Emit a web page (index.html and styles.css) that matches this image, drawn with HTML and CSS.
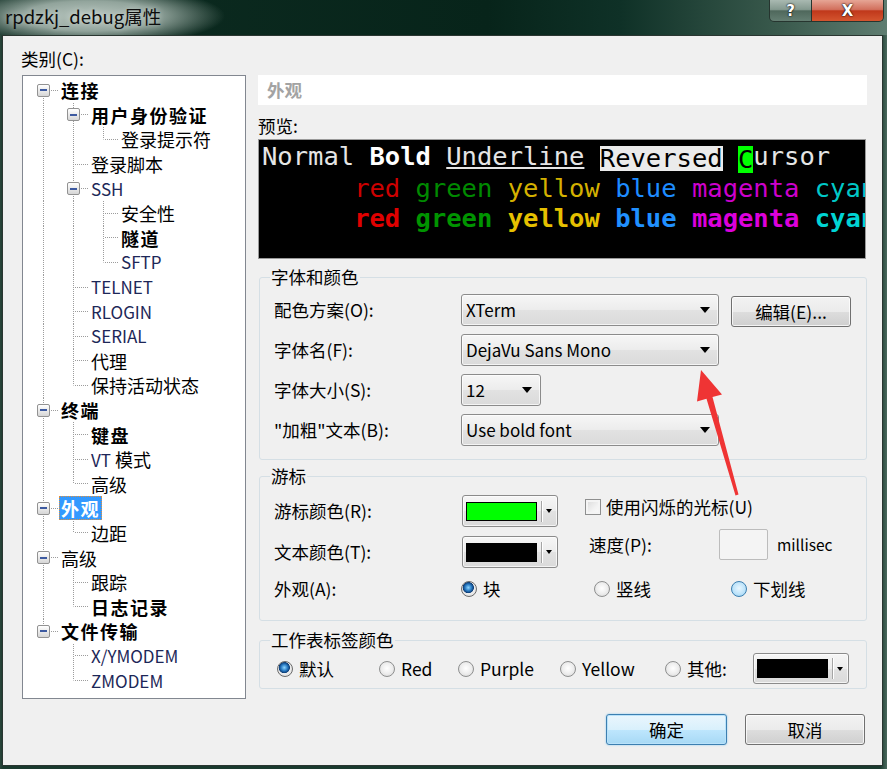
FILE: index.html
```html
<!DOCTYPE html>
<html>
<head>
<meta charset="utf-8">
<title>rpdzkj_debug属性</title>
<link rel="stylesheet" href="styles.css">
</head>
<body>
<div class="window">
  <div class="titlebar">
    <div class="title">rpdzkj_debug属性</div>
    <div class="caption">
      <div class="cbtn help">?</div>
      <div class="cbtn close">X</div>
    </div>
  </div>
  <div class="client">
    <div class="main">
      <div class="left">
        <div class="cat-label">类别(C):</div>
        <div class="tree">
          <div class="row"><span class="c xf"><span class="bx"></span></span><span class="tx b">连接</span></div>
          <div class="row"><span class="c v"></span><span class="c x"><span class="bx"></span></span><span class="tx b">用户身份验证</span></div>
          <div class="row"><span class="c v"></span><span class="c v"></span><span class="c l"></span><span class="tx">登录提示符</span></div>
          <div class="row"><span class="c v"></span><span class="c t"></span><span class="tx">登录脚本</span></div>
          <div class="row"><span class="c v"></span><span class="c x"><span class="bx"></span></span><span class="tx lat">SSH</span></div>
          <div class="row"><span class="c v"></span><span class="c v"></span><span class="c t"></span><span class="tx">安全性</span></div>
          <div class="row"><span class="c v"></span><span class="c v"></span><span class="c t"></span><span class="tx b">隧道</span></div>
          <div class="row"><span class="c v"></span><span class="c v"></span><span class="c l"></span><span class="tx lat">SFTP</span></div>
          <div class="row"><span class="c v"></span><span class="c t"></span><span class="tx lat">TELNET</span></div>
          <div class="row"><span class="c v"></span><span class="c t"></span><span class="tx lat">RLOGIN</span></div>
          <div class="row"><span class="c v"></span><span class="c t"></span><span class="tx lat">SERIAL</span></div>
          <div class="row"><span class="c v"></span><span class="c t"></span><span class="tx">代理</span></div>
          <div class="row"><span class="c v"></span><span class="c l"></span><span class="tx">保持活动状态</span></div>
          <div class="row"><span class="c x"><span class="bx"></span></span><span class="tx b">终端</span></div>
          <div class="row"><span class="c v"></span><span class="c t"></span><span class="tx b">键盘</span></div>
          <div class="row"><span class="c v"></span><span class="c t"></span><span class="tx"><span class="latc">VT</span> 模式</span></div>
          <div class="row"><span class="c v"></span><span class="c l"></span><span class="tx">高级</span></div>
          <div class="row"><span class="c x"><span class="bx"></span></span><span class="tx b sel">外观</span></div>
          <div class="row"><span class="c v"></span><span class="c l"></span><span class="tx">边距</span></div>
          <div class="row"><span class="c x"><span class="bx"></span></span><span class="tx">高级</span></div>
          <div class="row"><span class="c v"></span><span class="c t"></span><span class="tx">跟踪</span></div>
          <div class="row"><span class="c v"></span><span class="c l"></span><span class="tx b">日志记录</span></div>
          <div class="row"><span class="c xl"><span class="bx"></span></span><span class="tx b">文件传输</span></div>
          <div class="row"><span class="c"></span><span class="c t"></span><span class="tx lat">X/YMODEM</span></div>
          <div class="row"><span class="c"></span><span class="c l"></span><span class="tx lat">ZMODEM</span></div>
        </div>
      </div>
      <div class="right">
        <div class="page-head">外观</div>
        <div class="preview-label">预览:</div>
        <div class="preview">
<div class="pl">Normal <b class="bw">Bold</b> <u>Underline</u> <span class="rev">Reversed</span> <span class="cur">C</span>ursor</div>
<div class="pl">      <span class="cr">red</span> <span class="cg">green</span> <span class="cy">yellow</span> <span class="cb">blue</span> <span class="cm">magenta</span> <span class="cc">cyan</span></div>
<div class="pl bold">      <span class="cr">red</span> <span class="cg">green</span> <span class="cy">yellow</span> <span class="cb">blue</span> <span class="cm">magenta</span> <span class="cc">cyan</span></div>
        </div>

        <fieldset class="grp g1">
          <legend>字体和颜色</legend>
          <div class="gbody b1">
            <div class="frow">
              <span class="flabel">配色方案(O):</span>
              <div class="combo wide"><span>XTerm</span><span class="dd"></span></div>
              <div class="btn edit">编辑(E)...</div>
            </div>
            <div class="frow">
              <span class="flabel">字体名(F):</span>
              <div class="combo wide"><span>DejaVu Sans Mono</span><span class="dd"></span></div>
            </div>
            <div class="frow">
              <span class="flabel">字体大小(S):</span>
              <div class="combo small"><span>12</span><span class="dd"></span></div>
            </div>
            <div class="frow">
              <span class="flabel">"加粗"文本(B):</span>
              <div class="combo wide"><span>Use bold font</span><span class="dd"></span></div>
            </div>
          </div>
        </fieldset>

        <fieldset class="grp g2">
          <legend>游标</legend>
          <div class="gbody b2">
            <div class="crow">
              <span class="flabel2">游标颜色(R):</span>
              <div class="ccombo"><span class="swatch sw-green"></span><span class="csep"></span><span class="cdd"></span></div>
              <div class="chk-wrap"><span class="chk"></span><span>使用闪烁的光标(U)</span></div>
            </div>
            <div class="crow r2">
              <span class="flabel2">文本颜色(T):</span>
              <div class="ccombo"><span class="swatch sw-black"></span><span class="csep"></span><span class="cdd"></span></div>
              <div class="speed">
                <span class="speed-label">速度(P):</span>
                <span class="num"></span>
                <span class="unit">millisec</span>
              </div>
            </div>
            <div class="crow r3">
              <span class="flabel3">外观(A):</span>
              <span class="ropt w133"><span class="radio on"></span>块</span>
              <span class="ropt w137"><span class="radio"></span>竖线</span>
              <span class="ropt"><span class="radio hover"></span>下划线</span>
            </div>
          </div>
        </fieldset>

        <fieldset class="grp g3">
          <legend>工作表标签颜色</legend>
          <div class="gbody b3">
            <span class="ropt w102"><span class="radio on"></span>默认</span>
            <span class="ropt w79"><span class="radio"></span>Red</span>
            <span class="ropt w102"><span class="radio"></span>Purple</span>
            <span class="ropt w105"><span class="radio"></span>Yellow</span>
            <span class="ropt w88"><span class="radio"></span>其他:</span>
            <div class="ccombo h31"><span class="swatch sw-black"></span><span class="csep"></span><span class="cdd"></span></div>
          </div>
        </fieldset>
      </div>
    </div>
    <div class="buttons">
      <div class="btn ok">确定</div>
      <div class="btn cancel">取消</div>
    </div>
  </div>
  <svg class="arrow" width="887" height="769" viewBox="0 0 887 769">
    <polygon points="701,370 722,394.5 712.5,397 738.5,494.5 735.5,495.5 706.5,398.7 697,401.5" fill="#ef3434"/>
  </svg>
</div>
</body>
</html>
```

FILE: styles.css
```css
* { box-sizing: border-box; }
html, body { margin: 0; padding: 0; }
body {
  width: 887px;
  height: 769px;
  overflow: hidden;
  background: #16372b;
  font-family: "Noto Sans CJK SC", "Noto Sans", sans-serif;
  color: #000;
}
.window {
  position: relative;
  width: 887px;
  height: 769px;
  background: linear-gradient(to right, #2c463c 0, #1a3a2e 3px, #1a3a2e 880px, #4b6a5e 887px);
}

/* title bar */
.titlebar {
  height: 35px;
  display: flex;
  justify-content: space-between;
  background:
    radial-gradient(ellipse 135px 30px at 90px 16px, rgba(184,198,191,1) 0%, rgba(160,177,169,0.9) 50%, rgba(14,44,32,0) 100%),
    linear-gradient(to right, #0d2c21 0%, #07241a 55%, #0f3127 70%, #3a5a4d 88%, #5f7d71 100%);
}
.title {
  padding: 4px 0 0 5px;
  font-size: 18.5px;
  line-height: 24px;
  color: #0c0c0c;
  text-shadow: 0 0 6px rgba(255,255,255,0.5);
}
.caption {
  display: flex;
  margin-right: 3px;
  height: 22px;
}
.cbtn {
  height: 22px;
  display: flex;
  align-items: center;
  justify-content: center;
  color: #fff;
  font-family: "DejaVu Sans", sans-serif;
  font-weight: bold;
  font-size: 15px;
  text-shadow: 0 0 2px #000, 0 0 1px #000;
  border: 1px solid #26352f;
  border-top: none;
}
.help {
  width: 43px;
  border-radius: 0 0 0 5px;
  background: linear-gradient(#a9b9b1 0%, #84998f 45%, #4f685c 52%, #647e72 100%);
}
.close {
  width: 72px;
  border-left: none;
  border-radius: 0 0 5px 0;
  background: linear-gradient(#e6a595 0%, #d2705d 45%, #c0381b 52%, #d4552f 100%);
}

/* client */
.client {
  margin-left: 2px;
  width: 881px;
  height: 731px;
  border: 1px solid #2a3631;
  background: #f0f0f0;
  padding: 12px 17px 0 19px;
}
.main {
  display: grid;
  grid-template-columns: 224px 609px;
  column-gap: 12px;
}
.cat-label {
  font-size: 17.5px;
  line-height: 22px;
  margin-left: -1px;
  margin-bottom: 5px;
}

/* tree */
.tree {
  --vd: repeating-linear-gradient(to bottom, #9c9c9c 0 1px, transparent 1px 2px);
  --hd: repeating-linear-gradient(to right, #9c9c9c 0 1px, transparent 1px 2px);
  width: 224px;
  height: 624px;
  border: 1px solid #828790;
  background: #fff;
  padding: 2px 0 0 6px;
}
.row {
  display: flex;
  height: 24.6px;
}
.c {
  width: 30px;
  flex: none;
  background-repeat: no-repeat;
}
.c.v {
  background-image: var(--vd);
  background-size: 1px 100%;
  background-position: 14px 0;
}
.c.t {
  background-image: var(--vd), var(--hd);
  background-size: 1px 100%, 14px 1px;
  background-position: 14px 0, 16px 50%;
}
.c.l {
  background-image: var(--vd), var(--hd);
  background-size: 1px 50%, 14px 1px;
  background-position: 14px 0, 16px 50%;
}
.c.x, .c.xf, .c.xl {
  display: flex;
  align-items: center;
  background-image: var(--vd), var(--hd);
  background-size: 1px 100%, 8px 1px;
  background-position: 14px 0, 22px 50%;
}
.c.xf {
  background-size: 1px 50%, 8px 1px;
  background-position: 14px 100%, 22px 50%;
}
.c.xl {
  background-size: 1px 50%, 8px 1px;
  background-position: 14px 0, 22px 50%;
}
.bx {
  width: 13px;
  height: 13px;
  margin-left: 8px;
  border: 1px solid #929292;
  border-radius: 2px;
  background:
    linear-gradient(#3d5aa0, #3d5aa0) center / 7px 2px no-repeat,
    linear-gradient(#ffffff, #d6d6d6);
}
.tx {
  align-self: center;
  margin-left: 2px;
  font-size: 18px;
  line-height: 24px;
  white-space: nowrap;
}
.tx.b { font-weight: bold; letter-spacing: 1.5px; }
.lat, .latc { color: #1d2758; font-size: 17px; }
.tx.sel {
  margin-left: 0;
  padding: 0 2px;
  background: #3399ff;
  color: #fff;
  outline: 1px dotted #e3913d;
  outline-offset: -1px;
}

/* right panel */
.right { padding-top: 27px; }
.page-head {
  height: 30px;
  background: #fff;
  padding-left: 9px;
  font-size: 17.5px;
  line-height: 30px;
  font-weight: bold;
  color: #a3a3a3;
}
.preview-label {
  margin-top: 10px;
  margin-bottom: 2px;
  font-size: 17.5px;
  line-height: 22px;
}
.preview {
  width: 608px;
  height: 120px;
  border: 1px solid #9a9a9a;
  background: #000;
  padding: 1px 0 0 3px;
  overflow: hidden;
  font-family: "DejaVu Sans Mono", monospace;
  font-size: 25.5px;
  line-height: 30px;
  color: #e5e5e5;
}
.pl { white-space: pre; }
.pl.bold { font-weight: bold; }
.bw { color: #fff; }
.rev {
  display: inline-block;
  background: #ebebeb;
  color: #000;
  line-height: 25px;
  vertical-align: -1.5px;
}
.cur {
  display: inline-block;
  background: #00ff00;
  color: #000;
  line-height: 27px;
  vertical-align: -2.5px;
}
.cr { color: #cd0000; }
.cg { color: #008a00; }
.cy { color: #d4b100; }
.cb { color: #1e8cff; }
.cm { color: #cd00cd; }
.cc { color: #00c8c8; }
.bold .cr { color: #e00000; }
.bold .cg { color: #009400; }
.bold .cy { color: #e6c000; }
.bold .cb { color: #2090ff; }
.bold .cm { color: #dc00dc; }
.bold .cc { color: #00d4d4; }

/* group boxes */
.grp {
  width: 608px;
  margin: 0 0 0 1px;
  padding: 0;
  min-width: 0;
  border: 1px solid #d5dfe5;
  border-radius: 3px;
  font-size: 17.5px;
}
.grp legend {
  margin-left: 10px;
  padding: 0 1px;
  line-height: 20px;
  font-size: 17.5px;
}
.g1 { margin-top: 8px; }
.g2 { margin-top: 6px; }
.g3 { margin-top: 9px; }
.gbody { padding-left: 14px; }
.b1 { padding-top: 7px; padding-bottom: 13px; }
.b2 { padding-top: 9px; padding-bottom: 20px; }
.b3 {
  padding: 3px 0 4px 17px;
  display: flex;
  align-items: center;
}

.frow {
  display: flex;
  align-items: center;
  height: 32px;
  margin-bottom: 8px;
}
.frow:last-child { margin-bottom: 0; }
.flabel { width: 187px; flex: none; line-height: 22px; }
.combo {
  display: flex;
  align-items: center;
  height: 32px;
  border: 1px solid #8b8b8b;
  border-radius: 3px;
  padding-left: 4px;
  background: linear-gradient(#f6f6f6 0%, #ececec 50%, #e2e2e2 51%, #dadada 100%);
  box-shadow: inset 0 0 0 1px rgba(255,255,255,0.7);
  font-size: 17px;
  line-height: 22px;
}
.combo.wide { width: 258px; }
.combo.small { width: 80px; }
.dd {
  margin-left: auto;
  margin-right: 8px;
  width: 0;
  height: 0;
  border-left: 5px solid transparent;
  border-right: 5px solid transparent;
  border-top: 6px solid #000;
}
.btn {
  display: flex;
  align-items: center;
  justify-content: center;
  height: 31px;
  border: 1px solid #707070;
  border-radius: 3px;
  background: linear-gradient(#f2f2f2 0%, #ebebeb 50%, #dddddd 51%, #cfcfcf 100%);
  box-shadow: inset 0 0 0 1px rgba(255,255,255,0.75);
  font-size: 17.5px;
  line-height: 22px;
}
.btn.edit { width: 120px; margin-left: 12px; margin-top: 3px; }

/* cursor group */
.crow {
  display: flex;
  align-items: center;
  height: 32px;
}
.crow.r2 { margin-top: 9px; }
.crow.r3 { margin-top: 10px; height: 22px; }
.flabel2 { width: 188px; flex: none; line-height: 22px; }
.flabel3 { width: 187px; flex: none; line-height: 22px; }
.ccombo {
  display: flex;
  align-items: center;
  width: 96px;
  height: 32px;
  flex: none;
  border: 1px solid #8b8b8b;
  border-radius: 3px;
  padding-left: 3px;
  background: linear-gradient(#f6f6f6 0%, #ececec 50%, #e2e2e2 51%, #dadada 100%);
  box-shadow: inset 0 0 0 1px rgba(255,255,255,0.7);
}
.ccombo.h31 { height: 31px; }
.swatch {
  width: 71px;
  height: 19px;
  border: 1px solid #000;
}
.sw-green { background: #00ff00; }
.sw-black { background: #000; }
.csep {
  width: 2px;
  height: 21px;
  margin-left: 4px;
  border-left: 1px solid #a5a5a5;
  border-right: 1px solid #ffffff;
}
.cdd {
  margin-left: 3px;
  width: 0;
  height: 0;
  border-left: 3px solid transparent;
  border-right: 3px solid transparent;
  border-top: 4px solid #000;
}
.chk-wrap {
  display: flex;
  align-items: center;
  margin-left: 27px;
  align-self: flex-start;
  margin-top: 1px;
  line-height: 22px;
}
.chk {
  width: 16px;
  height: 16px;
  margin-right: 5px;
  border: 1px solid #8e8f8f;
  background: linear-gradient(135deg, #d8d8d8 0%, #f2f2f2 60%, #fbfbfb 100%);
  box-shadow: inset 0 0 0 2px #f4f4f4;
}
.speed {
  display: flex;
  align-items: center;
  margin-left: 31px;
  align-self: flex-start;
  margin-top: -7px;
}
.speed-label { width: 130px; line-height: 31px; }
.num {
  width: 49px;
  height: 31px;
  border: 1px solid #bcbcbc;
  border-radius: 2px;
  background: #f4f4f4;
}
.unit {
  margin-left: 9px;
  font-size: 15.5px;
  line-height: 31px;
}

/* radios */
.ropt {
  display: flex;
  align-items: center;
  flex: none;
  line-height: 22px;
}
.w133 { width: 133px; }
.w137 { width: 137px; }
.w102 { width: 102px; }
.w79 { width: 79px; }
.w105 { width: 105px; }
.w88 { width: 88px; }
.radio {
  width: 16px;
  height: 16px;
  margin-right: 6px;
  border-radius: 50%;
  border: 1px solid #8e8f8f;
  background: radial-gradient(circle at 50% 45%, #ffffff 0%, #eeeeee 50%, #d4d4d4 100%);
}
.radio.on {
  border-color: #6b6b6b;
  background:
    radial-gradient(circle at 45% 40%, #8fd6ff 0%, #2a7cc4 28%, #0d3e78 46%, rgba(13,62,120,0) 52%),
    radial-gradient(circle at 50% 45%, #ffffff 0%, #eeeeee 50%, #d4d4d4 100%);
}
.radio.hover {
  border-color: #3c7fb1;
  background: radial-gradient(circle at 50% 45%, #e8f6ff 0%, #bfe4fa 55%, #8fcbee 100%);
}

/* bottom buttons */
.buttons {
  display: flex;
  justify-content: flex-end;
  gap: 18px;
  margin-top: 15px;
}
.btn.ok {
  width: 121px;
  border-color: #3c7fb1;
  background: linear-gradient(#eaf6fd 0%, #d9f0fc 50%, #bee6fd 51%, #a7d9f5 100%);
  box-shadow: inset 0 0 0 1px #b9e2fa, 0 0 2px #7fc4ee;
}
.btn.cancel { width: 120px; }

.arrow {
  position: absolute;
  left: 0;
  top: 0;
  pointer-events: none;
}
```
